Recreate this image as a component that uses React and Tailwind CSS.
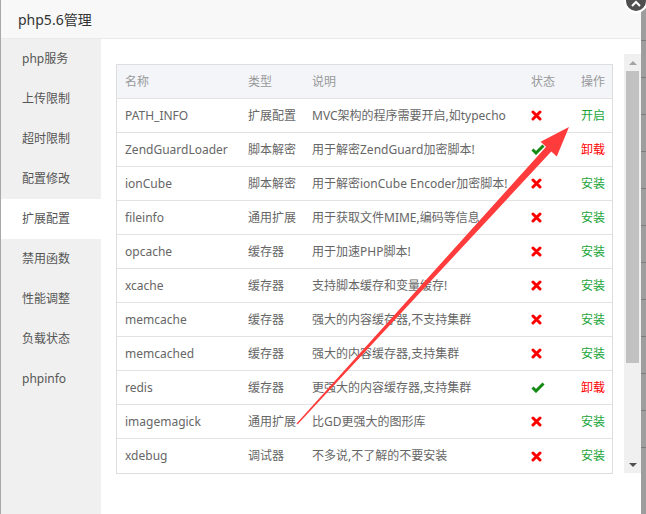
import React from "react";

const menu = ["php服务", "上传限制", "超时限制", "配置修改", "扩展配置", "禁用函数", "性能调整", "负载状态", "phpinfo"];

const rows = [
  ["PATH_INFO", "扩展配置", "MVC架构的程序需要开启,如typecho", false, "开启"],
  ["ZendGuardLoader", "脚本解密", "用于解密ZendGuard加密脚本!", true, "卸载"],
  ["ionCube", "脚本解密", "用于解密ionCube Encoder加密脚本!", false, "安装"],
  ["fileinfo", "通用扩展", "用于获取文件MIME,编码等信息", false, "安装"],
  ["opcache", "缓存器", "用于加速PHP脚本!", false, "安装"],
  ["xcache", "缓存器", "支持脚本缓存和变量缓存!", false, "安装"],
  ["memcache", "缓存器", "强大的内容缓存器,不支持集群", false, "安装"],
  ["memcached", "缓存器", "强大的内容缓存器,支持集群", false, "安装"],
  ["redis", "缓存器", "更强大的内容缓存器,支持集群", true, "卸载"],
  ["imagemagick", "通用扩展", "比GD更强大的图形库", false, "安装"],
  ["xdebug", "调试器", "不多说,不了解的不要安装", false, "安装"],
];

function Cross() {
  return (
    <svg width="11" height="11" viewBox="0 0 11 11">
      <path d="M2 2 L9 9 M9 2 L2 9" stroke="#ff0000" strokeWidth="3" strokeLinecap="round" />
    </svg>
  );
}

function Check() {
  return (
    <svg width="14" height="11" viewBox="0 0 14 11">
      <path d="M1.5 5.5 L5 9 L12.5 1.5" fill="none" stroke="#138a13" strokeWidth="3" />
    </svg>
  );
}

function Row({ r, last }) {
  const [name, type, desc, on, op] = r;
  return (
    <div className={"grid grid-cols-[122px_64px_219px_50px_1fr] h-[34px] items-center text-[12px] text-[#666] " + (last ? "" : "border-b border-[#e2e2e2]")}>
      <div className="pl-[8px]">{name}</div>
      <div className="pl-[9px]">{type}</div>
      <div className="pl-[9px] whitespace-nowrap">{desc}</div>
      <div className="pl-[9px] flex items-center">{on ? <Check /> : <Cross />}</div>
      <div className={"text-right pr-[7px] " + (on ? "text-[#ff0000]" : "text-[#20a53a]")}>{op}</div>
    </div>
  );
}

export default function App() {
  return (
    <div
      className="relative w-[646px] h-[514px] overflow-hidden flex bg-white"
      style={{ fontFamily: '"Noto Sans", "Noto Sans CJK SC", sans-serif' }}
    >
      <div className="w-[641px] h-full flex flex-col border-l border-[#a8a8a8]">
        {/* header */}
        <div className="h-[39px] shrink-0 bg-[#f8f8f8] border-b border-[#eaeaea] flex items-center pl-[17px] text-[14px] text-[#333]">
          php5.6管理
        </div>
        <div className="flex flex-1">
          {/* sidebar */}
          <div className="w-[100px] bg-[#f0f0f0] flex flex-col">
            {menu.map((m) => (
              <div
                key={m}
                className={"h-[40px] flex items-center pl-[21px] text-[12px] text-[#555] " + (m === "扩展配置" ? "bg-white" : "")}
              >
                {m}
              </div>
            ))}
          </div>
          {/* content */}
          <div className="flex-1 pt-[15px] pl-[15px] flex">
            <div className="w-[497px] pt-[10px]">
              <div className="border border-[#dedede]">
                <div className="grid grid-cols-[122px_64px_219px_50px_1fr] h-[34px] items-center bg-[#f3f5f9] border-b border-[#e2e2e2] text-[12px] text-[#999]">
                  <div className="pl-[8px]">名称</div>
                  <div className="pl-[9px]">类型</div>
                  <div className="pl-[9px]">说明</div>
                  <div className="pl-[9px]">状态</div>
                  <div className="text-right pr-[7px]">操作</div>
                </div>
                {rows.map((r, i) => (
                  <Row key={r[0]} r={r} last={i === rows.length - 1} />
                ))}
              </div>
            </div>
            {/* fake scrollbar */}
            <div className="ml-[11px] w-[17px] h-[419px] bg-[#f0f0f0] flex flex-col items-center">
              <div className="h-[17px] flex items-center justify-center">
                <div className="w-0 h-0 border-l-[4px] border-r-[4px] border-b-[4px] border-l-transparent border-r-transparent border-b-[#a3a3a3]" />
              </div>
              <div className="w-[13px] h-[292px] bg-[#c1c1c1]" />
              <div className="flex-1" />
              <div className="h-[17px] flex items-center justify-center">
                <div className="w-0 h-0 border-l-[4px] border-r-[4px] border-t-[4px] border-l-transparent border-r-transparent border-t-[#505050]" />
              </div>
            </div>
          </div>
        </div>
      </div>
      {/* page behind */}
      <div className="w-[5px] h-full bg-[#9d9d9d] flex flex-col">
        <div className="h-[40px]" />
        {Array.from({ length: 12 }).map((_, i) => (
          <div key={i} className="h-[37px] border-t border-[#7c7c7c]" />
        ))}
      </div>
      {/* close button */}
      <div className="absolute right-[-2px] top-[-11px] w-[24px] h-[24px] rounded-full bg-[#4f4f4f] border-2 border-white flex items-center justify-center">
        <svg width="12" height="12" viewBox="0 0 12 12" className="mt-[6px]">
          <path d="M2 8 L6 4 L10 8" fill="none" stroke="#fff" strokeWidth="2" />
        </svg>
      </div>
      {/* red annotation arrow */}
      <svg className="absolute left-0 top-0 pointer-events-none" width="646" height="514" viewBox="0 0 646 514">
        <polygon
          points="297.5,424.4 551.3,151.5 556.8,156.5 569,127 540.6,141.7 546.1,146.7 296.5,423.6"
          fill="#ff3b3b"
        />
      </svg>
    </div>
  );
}
